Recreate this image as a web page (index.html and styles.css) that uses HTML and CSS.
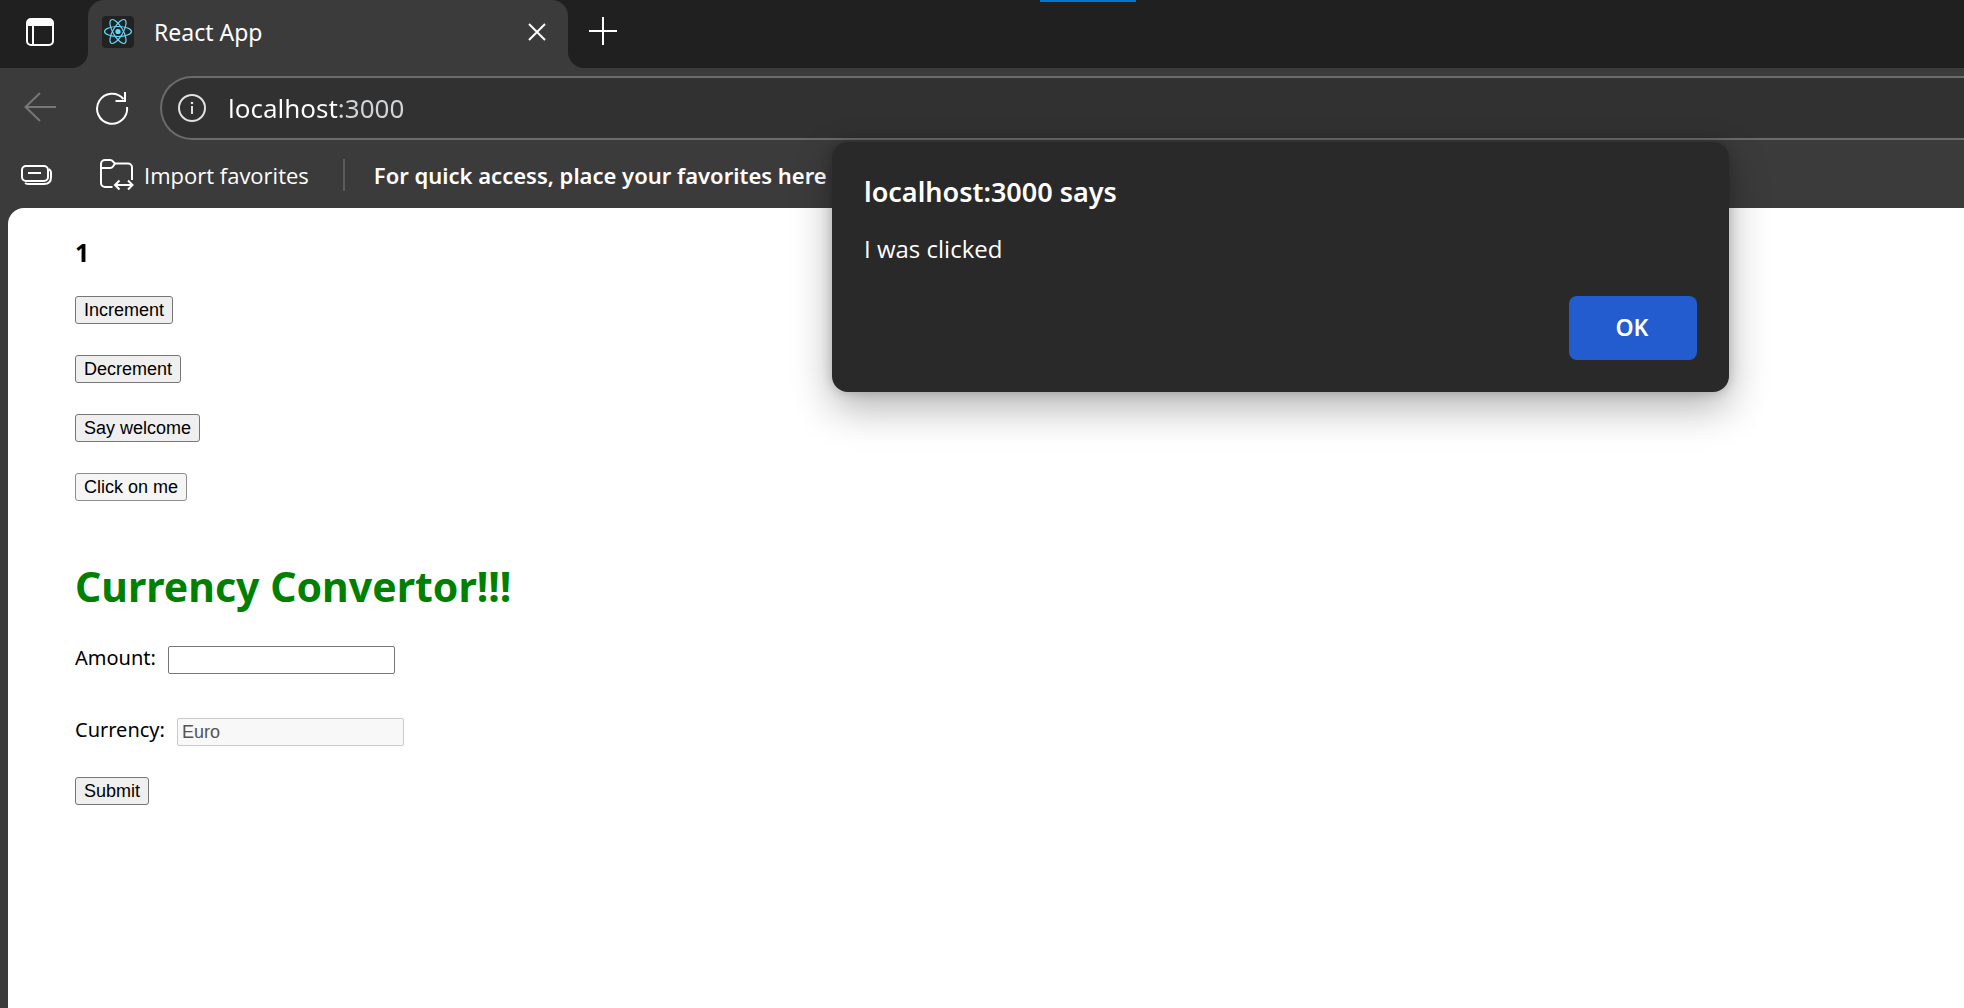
FILE: index.html
```html
<!DOCTYPE html>
<html lang="en">
<head>
<meta charset="utf-8">
<title>React App</title>
<link rel="stylesheet" href="styles.css">
</head>
<body>
<header class="tab-strip">
  <div class="strip-start">
    <button class="icon-button" type="button" aria-label="Tab actions menu">
      <svg width="28" height="28" viewBox="0 0 28 28" fill="none"><rect x="1" y="1" width="26" height="26" rx="4" stroke="#fff" stroke-width="2"/><path d="M1 8V5a4 4 0 0 1 4-4h18a4 4 0 0 1 4 4v3z" fill="#fff"/><path d="M7 8v19" stroke="#fff" stroke-width="2"/></svg>
    </button>
  </div>
  <div class="tab-slot">
    <div class="tab">
      <svg width="32" height="32" viewBox="0 0 32 32" fill="none"><rect width="32" height="32" rx="4" fill="#222"/><g stroke="#61dafb" stroke-width="1.2"><ellipse cx="16" cy="15.500" rx="13.500" ry="5"/><ellipse cx="16" cy="15.500" rx="13.500" ry="5" transform="rotate(60 16 15.5)"/><ellipse cx="16" cy="15.500" rx="13.500" ry="5" transform="rotate(120 16 15.5)"/></g><circle cx="16" cy="15.500" r="2.600" fill="#61dafb"/></svg>
      <span class="tab-title">React App</span>
      <button class="icon-button" type="button" aria-label="Close tab">
        <svg width="18" height="18" viewBox="0 0 18 18" fill="none" stroke="#fff" stroke-width="2"><path d="M1 1l16 16M17 1L1 17"/></svg>
      </button>
    </div>
  </div>
  <div class="strip-end">
    <button class="icon-button" type="button" aria-label="New tab">
      <svg width="28" height="28" viewBox="0 0 28 28" fill="none" stroke="#fff" stroke-width="2"><path d="M14 0v28M0 14h28"/></svg>
    </button>
  </div>
  <div class="top-accent"></div>
</header>

<nav class="toolbar">
  <button class="icon-button" type="button" aria-label="Back" disabled>
    <svg width="32" height="32" viewBox="0 0 32 32" fill="none" stroke="#777" stroke-width="2"><path d="M32 15H1.500M16 1L1.500 15L16 29"/></svg>
  </button>
  <button class="icon-button" type="button" aria-label="Refresh">
    <svg width="34" height="34" viewBox="0 0 34 34" fill="none" stroke="#fff" stroke-width="2"><path d="M32 16A15 15 0 1 1 28.500 8"/><path d="M30 1v9h-9.500"/></svg>
  </button>
  <div class="address-bar">
    <svg width="28" height="28" viewBox="0 0 28 28" fill="none"><circle cx="14" cy="14" r="13" stroke="#e0e0e0" stroke-width="2"/><path d="M14 12v8" stroke="#e0e0e0" stroke-width="2"/><circle cx="14" cy="9" r="1.300" fill="#e0e0e0"/></svg>
    <input class="address-input" type="text" aria-label="Address" value="localhost:3000">
  </div>
</nav>

<div class="favorites-bar">
  <button class="icon-button" type="button" aria-label="Workspaces">
    <svg width="32" height="22" viewBox="0 0 32 22" fill="none" stroke="#fff" stroke-width="2"><rect x="2" y="2" width="26" height="15" rx="4"/><path d="M8 9h13"/><path d="M29 5q2 1.500 2 3.500V13q0 7-7 7H9q-2.500 0-4-1"/></svg>
  </button>
  <button class="import-button" type="button">
    <svg width="34" height="32" viewBox="0 0 34 32" fill="none" stroke="#fff" stroke-width="2"><path d="M12.500 28H5a4 4 0 0 1-4-4V5a4 4 0 0 1 4-4h5q2 0 3 1.500L15 4.500h13a4 4 0 0 1 4 4V21"/><path d="M1 9h9q2 0 3-1.500l2-3"/><path d="M16 26h15.500M19.500 21.500L15 26l4.500 4.500M28 21.500l4.500 4.500-4.500 4.500"/></svg>
    <span>Import favorites</span>
  </button>
  <div class="separator"></div>
  <strong class="favorites-hint">For quick access, place your favorites here</strong>
</div>

<main class="page">
  <h3 class="counter">1</h3>
  <div class="actions">
    <button class="push-button" type="button">Increment</button>
    <button class="push-button" type="button">Decrement</button>
    <button class="push-button" type="button">Say welcome</button>
    <button class="push-button pressed" type="button">Click on me</button>
  </div>
  <h1 class="convertor-title">Currency Convertor!!!</h1>
  <form class="convertor">
    <div class="field">
      <label for="amount">Amount:</label>
      <input class="text-input" id="amount" type="text">
    </div>
    <div class="field">
      <label for="currency">Currency:</label>
      <input class="text-input" id="currency" type="text" value="Euro" disabled>
    </div>
    <button class="push-button submit" type="submit">Submit</button>
  </form>
</main>

<dialog class="alert" open aria-labelledby="alert-title">
  <h2 class="alert-title" id="alert-title">localhost:3000 says</h2>
  <p class="alert-message">I was clicked</p>
  <button class="alert-ok" type="button">OK</button>
</dialog>
</body>
</html>
```
FILE: styles.css
```css
* {
  box-sizing: border-box;
}

body {
  display: flex;
  flex-direction: column;
  min-height: 100vh;
  margin: 0;
  position: relative;
  overflow-x: hidden;
  background: #3b3b3b;
  color: #fff;
  font-family: "Segoe UI", "Noto Sans", "Open Sans", sans-serif;
}

svg {
  display: block;
  flex: none;
}

.icon-button {
  flex: none;
  padding: 0;
  border: 0;
  background: none;
}

/* Tab strip */
.tab-strip {
  display: flex;
  height: 68px;
  position: relative;
}

.strip-start,
.strip-end {
  display: flex;
  align-items: center;
  padding-bottom: 4px;
  background: #202020;
}

.strip-start {
  justify-content: center;
  width: 88px;
  padding-right: 8px;
  border-bottom-right-radius: 16px;
}

.strip-end {
  flex: 1;
  padding-left: 21px;
  padding-bottom: 6px;
  border-bottom-left-radius: 16px;
}

.tab-slot {
  width: 480px;
  background: linear-gradient(#202020 50%, #3b3b3b 50%);
}

.tab {
  display: flex;
  align-items: center;
  gap: 20px;
  height: 100%;
  padding: 0 22px 4px 14px;
  border-radius: 16px 16px 0 0;
  background: #3b3b3b;
}

.tab-title {
  flex: 1;
  font-size: 23px;
  line-height: 32px;
}

.top-accent {
  position: absolute;
  top: 0;
  left: 1040px;
  width: 96px;
  height: 2px;
  background: #0078d4;
}

/* Address row */
.toolbar {
  display: flex;
  align-items: center;
  height: 72px;
  padding: 8px 0 0 24px;
}

.toolbar .icon-button {
  margin-right: 39px;
}

.toolbar .icon-button + .icon-button {
  margin-right: 31px;
}

.address-bar {
  display: flex;
  flex: 1;
  align-items: center;
  gap: 22px;
  height: 64px;
  padding-left: 16px;
  border: 2px solid #6b6b6b;
  border-right: 0;
  border-radius: 32px 0 0 32px;
  background: #313131;
}

.address-input {
  flex: 1;
  min-width: 0;
  padding: 0;
  border: 0;
  outline: 0;
  background: linear-gradient(90deg, #fff 112px, #d2d5d8 112px) text;
  color: transparent;
  font: 400 26px/36px "Segoe UI", "Noto Sans", "Open Sans", sans-serif;
}

/* Favorites row */
.favorites-bar {
  display: flex;
  align-items: center;
  height: 68px;
  padding: 2px 0 0 20px;
}

.import-button {
  display: flex;
  align-items: center;
  gap: 10px;
  margin-left: 48px;
  padding: 0;
  border: 0;
  background: none;
  color: #fff;
  font: 400 22px/32px "Segoe UI", "Open Sans", "Noto Sans", sans-serif;
}

.separator {
  width: 2px;
  height: 32px;
  margin: 0 29px 0 34px;
  background: #5c5c5c;
}

.favorites-hint {
  font-size: 22px;
  font-weight: 600;
  line-height: 32px;
  white-space: nowrap;
}

/* Page */
.page {
  flex: 1;
  margin-left: 8px;
  padding: 28px 67px;
  border-top-left-radius: 16px;
  background: #fff;
  color: #000;
}

.counter {
  margin: 0 0 28px;
  font-size: 25px;
  line-height: 32px;
}

.actions {
  display: flex;
  flex-direction: column;
  align-items: flex-start;
  gap: 31px;
}

.push-button {
  height: 28px;
  padding: 0 8px;
  border: 1px solid #767676;
  border-radius: 3px;
  background: #efefef;
  color: #000;
  font: 18px/24px "Liberation Sans", Arial, sans-serif;
}

.push-button.pressed {
  border-color: #8d8d8d;
  background: #f5f5f5;
}

.convertor-title {
  margin: 57px 0 32px;
  color: #008000;
  font-size: 41px;
  font-weight: 700;
  line-height: 56px;
}

.field {
  display: flex;
  align-items: flex-start;
  gap: 12px;
  font-size: 20px;
  line-height: 24px;
}

.field + .field {
  margin-top: 44px;
}

.text-input {
  width: 227px;
  height: 28px;
  padding: 0 4px;
  border: 1px solid #767676;
  border-radius: 2px;
  background: #fff;
  font: 18px/24px "Liberation Sans", Arial, sans-serif;
}

.text-input:disabled {
  border-color: #cbcbcb;
  background: #f8f8f8;
  color: #545454;
}

.submit {
  display: block;
  margin-top: 31px;
}

/* Alert */
.alert {
  position: absolute;
  top: 142px;
  left: 832px;
  width: 897px;
  margin: 0;
  padding: 32px;
  border: 0;
  border-radius: 16px;
  background: #292929;
  color: #fff;
  box-shadow: 0 16px 40px rgba(0, 0, 0, 0.3), 0 0 12px rgba(0, 0, 0, 0.2);
}

.alert-title {
  margin: 0;
  font-size: 27px;
  font-weight: 600;
  line-height: 36px;
}

.alert-message {
  margin: 23px 0 31px;
  font-family: "Segoe UI", "Open Sans", "Noto Sans", sans-serif;
  font-size: 24px;
  line-height: 32px;
}

.alert-ok {
  display: block;
  width: 128px;
  height: 64px;
  margin-left: auto;
  padding: 0 2px 2px 0;
  border: 0;
  border-radius: 8px;
  background: #235ccf;
  color: #fff;
  font: 600 23px/32px "Segoe UI", "Noto Sans", "Open Sans", sans-serif;
}
```
